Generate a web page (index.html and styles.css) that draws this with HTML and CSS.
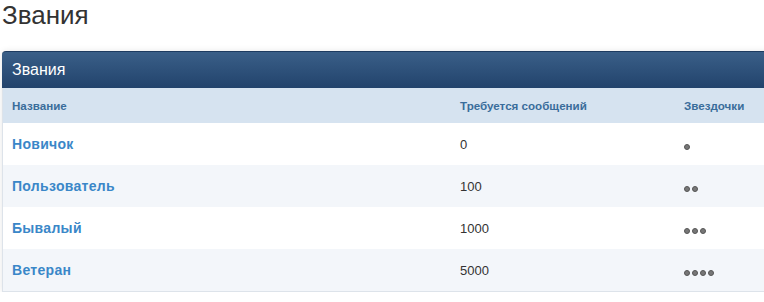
FILE: index.html
```html
<!DOCTYPE html>
<html lang="ru">
<head>
<meta charset="utf-8">
<link rel="stylesheet" href="styles.css">
</head>
<body>
<h1 class="page-title">Звания</h1>
<div class="panel">
  <div class="panel-head">Звания</div>
  <table class="ranks">
    <thead>
      <tr><th class="c-name">Название</th><th class="c-req">Требуется сообщений</th><th class="c-stars">Звездочки</th></tr>
    </thead>
    <tbody>
      <tr><td class="c-name"><a href="#">Новичок</a></td><td class="c-req">0</td><td class="c-stars"><span class="dot"></span></td></tr>
      <tr class="alt"><td class="c-name"><a href="#">Пользователь</a></td><td class="c-req">100</td><td class="c-stars"><span class="dot"></span><span class="dot"></span></td></tr>
      <tr><td class="c-name"><a href="#">Бывалый</a></td><td class="c-req">1000</td><td class="c-stars"><span class="dot"></span><span class="dot"></span><span class="dot"></span></td></tr>
      <tr class="alt"><td class="c-name"><a href="#">Ветеран</a></td><td class="c-req">5000</td><td class="c-stars"><span class="dot"></span><span class="dot"></span><span class="dot"></span><span class="dot"></span></td></tr>
    </tbody>
  </table>
</div>
</body>
</html>
```

FILE: styles.css
```css
html, body {
  margin: 0;
  padding: 0;
  background: #fff;
  overflow: hidden;
}
body {
  font-family: "Liberation Sans", Arial, sans-serif;
  color: #333;
  padding: 0 0 0 2px;
  width: 820px;
}
.page-title {
  margin: 0;
  padding-top: 0;
  font-size: 26px;
  font-weight: normal;
  line-height: 30px;
  color: #333;
  height: 51px;
}
.panel {
  width: 800px;
  border: 1px solid #dde3ea;
  border-top: none;
  border-radius: 5px 5px 0 0;
  box-shadow: 0 0 6px rgba(0,0,0,0.10);
  background: #fff;
}
.panel-head {
  height: 36px;
  border-top: 1px solid #1d3b60;
  border-radius: 4px 4px 0 0;
  margin: 0 -1px;
  padding: 0 10px;
  background: linear-gradient(#3a5f88, #22436c);
  color: #fff;
  font-size: 16px;
  line-height: 36px;
}
.ranks {
  width: 100%;
  border-collapse: collapse;
}
.ranks th {
  background: #d6e3f0;
  height: 35px;
  padding: 0 9px;
  text-align: left;
  font-size: 11.6px;
  font-weight: bold;
  color: #3a6d9b;
}
.ranks td {
  height: 42px;
  padding: 0 9px;
  font-size: 13px;
  color: #333;
}
.ranks tr.alt td {
  background: #f3f6fa;
}
.c-name { width: 430px; }
.c-req { width: 206px; }
.ranks a {
  color: #3a87c8;
  font-weight: bold;
  font-size: 14px;
  letter-spacing: 0.3px;
  text-decoration: none;
}
.c-stars {
  font-size: 0;
}
.dot {
  display: inline-block;
  width: 4px;
  height: 4px;
  margin-right: 2px;
  margin-top: 4px;
  border-radius: 50%;
  background: #777;
  border: 1px solid #555;
  vertical-align: middle;
}
```
